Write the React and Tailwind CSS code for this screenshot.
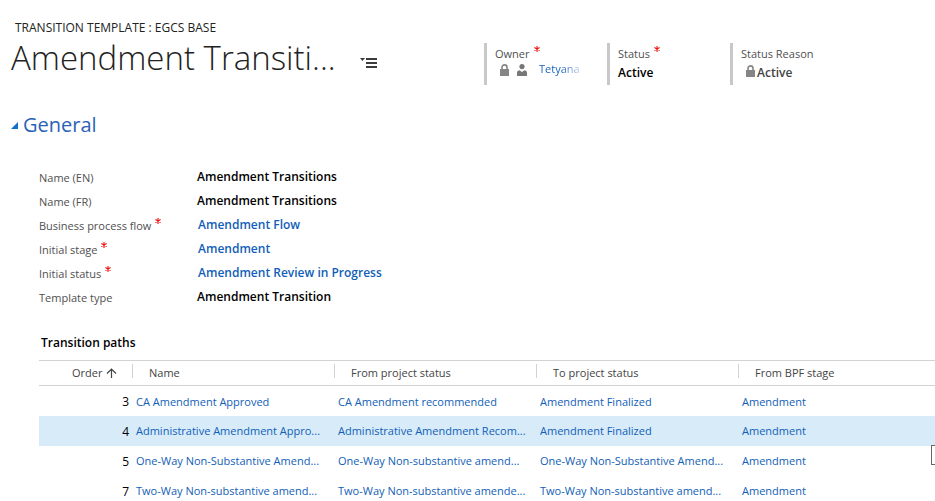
const LABEL = "text-[#505050]";

const headerFields = [
  { label: "Owner", required: true, kind: "owner" },
  { label: "Status", required: true, kind: "plain" },
  { label: "Status Reason", required: false, kind: "locked" },
];

const fields = [
  { label: "Name (EN)", value: "Amendment Transitions" },
  { label: "Name (FR)", value: "Amendment Transitions" },
  { label: "Business process flow", value: "Amendment Flow", required: true, link: true },
  { label: "Initial stage", value: "Amendment", required: true, link: true },
  { label: "Initial status", value: "Amendment Review in Progress", required: true, link: true },
  { label: "Template type", value: "Amendment Transition" },
];

const columns = ["Name", "From project status", "To project status", "From BPF stage"];

const rows = [
  { order: 3, cells: ["CA Amendment Approved", "CA Amendment recommended", "Amendment Finalized", "Amendment"] },
  {
    order: 4,
    selected: true,
    cells: ["Administrative Amendment Appro...", "Administrative Amendment Recom...", "Amendment Finalized", "Amendment"],
  },
  {
    order: 5,
    cells: ["One-Way Non-Substantive Amend...", "One-Way Non-substantive amend...", "One-Way Non-Substantive Amend...", "Amendment"],
  },
  {
    order: 7,
    cells: ["Two-Way Non-substantive amend...", "Two-Way Non-substantive amende...", "Two-Way Non-substantive amend...", "Amendment"],
  },
];

function Required() {
  return (
    <svg className="mb-2.5 ml-1 size-1.5 shrink-0" viewBox="0 0 6 6" stroke="#f01010" strokeWidth="1.1" aria-label="required">
      <path d="M3 0V6M0.4 1.5L5.6 4.5M5.6 1.5L0.4 4.5" />
    </svg>
  );
}

function Lock() {
  return (
    <svg className="h-3 w-[9px] shrink-0" viewBox="0 0 9 12" aria-hidden="true">
      <path d="M2 6V3.2A2.5 2.3 0 0 1 7 3.2V6" fill="none" stroke="#858585" strokeWidth="1.6" />
      <rect y="5" width="9" height="7" fill="#858585" />
    </svg>
  );
}

function Person() {
  return (
    <svg className="h-3 w-2.5 shrink-0" viewBox="0 0 10 12" fill="#777777" aria-hidden="true">
      <circle cx="5" cy="2.6" r="2.6" />
      <path d="M0 12V8.6Q0 6.4 2.6 6.2L5 8L7.4 6.2Q10 6.4 10 8.6V12Z" />
    </svg>
  );
}

function HeaderField({ label, required, kind }) {
  return (
    <div className="h-[42px] w-[123px] border-l-[3px] border-[#c8c8c8] pl-2 pt-[3px]">
      <div className={"flex h-4 items-center whitespace-nowrap text-[11px] leading-4 " + LABEL}>
        {label}
        {required && <Required />}
      </div>
      {kind === "owner" && (
        <div className="flex h-4 items-center pl-[5px] text-[11px] leading-4">
          <Lock />
          <span className="ml-2 flex"><Person /></span>
          <a href="#owner" className="mb-0.5 ml-3 bg-linear-to-r from-[#1160b7] from-55% to-[#c3d3ee] bg-clip-text font-medium text-transparent">
            Tetyana
          </a>
        </div>
      )}
      {kind === "plain" && <div className="pt-[3px] font-semibold leading-4 text-black">Active</div>}
      {kind === "locked" && (
        <div className="flex items-center pl-[5px] pt-[3px] font-semibold leading-4 text-[#444444]">
          <span className="mb-1 mr-0.5"><Lock /></span>
          Active
        </div>
      )}
    </div>
  );
}

export default function App() {
  return (
    <main className="relative h-screen overflow-hidden bg-white pt-5 font-['Open_Sans','Noto_Sans',sans-serif] text-[12px] text-black">
      <header className="flex h-[87px] items-start">
        <div className="w-[484px] shrink-0">
          <div className="pl-[15px] text-[12px] leading-4 text-[#222222]">TRANSITION TEMPLATE : EGCS BASE</div>
          <div className="flex items-center pl-[11px]">
            <h1 className="w-[349px] whitespace-nowrap text-[33px] font-light leading-[44px] text-[#222222]">Amendment Transiti...</h1>
            <button type="button" aria-label="Switch form" className="mt-2.5 h-3 w-[18px]">
              <svg className="h-3 w-[18px]" viewBox="0 0 18 12" fill="#3b3b3b" aria-hidden="true">
                <path d="M0 1H5L2.5 4ZM6 1H17V3H6ZM6 5H17V7H6ZM6 9H17V11H6Z" />
              </svg>
            </button>
          </div>
        </div>
        <div className="flex pt-[23px]">
          {headerFields.map((field) => (
            <HeaderField key={field.label} {...field} />
          ))}
        </div>
      </header>

      <h2>
        <button type="button" className="flex items-center pl-[11px] text-[20px] leading-9 text-[#2a62b5]">
          <svg className="mr-[5px] size-[7px]" viewBox="0 0 7 7" fill="#1072c6" aria-hidden="true">
            <path d="M7 0V7H0Z" />
          </svg>
          General
        </button>
      </h2>

      <dl className="pl-[39px] pt-[22px]">
        {fields.map((field) => (
          <div key={field.label} className="flex h-6 items-center">
            <dt className={"flex w-[158px] items-center pt-0.5 text-[11px] " + LABEL}>
              {field.label}
              {field.required && <Required />}
            </dt>
            <dd className="font-semibold">
              {field.link ? <a href="#record" className="pl-px text-[#1160b7]">{field.value}</a> : field.value}
            </dd>
          </div>
        ))}
      </dl>

      <section className="pl-[39px] pt-[26px]">
        <h3 className="h-[25px] pl-0.5 font-semibold leading-4">Transition paths</h3>
        <table className="w-full table-fixed border-collapse text-left text-[11px]">
          <colgroup>
            <col className="w-[93px]" />
            <col className="w-[202px]" />
            <col className="w-[202px]" />
            <col className="w-[202px]" />
            <col />
          </colgroup>
          <thead>
            <tr className="h-[25px] border-y border-[#d2d2d2] text-[#444444]">
              <th className="p-0 font-normal">
                <span className="flex items-center pl-[33px]">
                  Order
                  <svg className="ml-1 h-2.5 w-[11px]" viewBox="0 0 11 10" fill="none" stroke="#444444" strokeWidth="1.2" aria-hidden="true">
                    <path d="M5.5 10V1M1 5.5L5.5 1L10 5.5" />
                  </svg>
                </span>
              </th>
              {columns.map((name) => (
                <th key={name} className="p-0 align-middle font-normal">
                  <span className="flex items-center">
                    <span className="mb-1 mr-4 h-3.5 w-px bg-[#d2d2d2]" />
                    {name}
                  </span>
                </th>
              ))}
            </tr>
          </thead>
          <tbody>
            {rows.map((row) => (
              <tr key={row.order} className={row.selected ? "h-[30px] bg-[#d7ebf9]" : "h-[30px]"}>
                <td className="p-0 pr-[3px] pt-0.5 text-right text-[12px]">{row.order}</td>
                {row.cells.map((cell, i) => (
                  <td key={i} className="whitespace-nowrap p-0 pl-1 pt-0.5">
                    <a href="#path" className="text-[#1160b7]">{cell}</a>
                  </td>
                ))}
              </tr>
            ))}
          </tbody>
        </table>
      </section>

      <div className="absolute right-0 top-[445px] h-5 w-1 border-y border-l border-[#666666] bg-white" />
    </main>
  );
}
